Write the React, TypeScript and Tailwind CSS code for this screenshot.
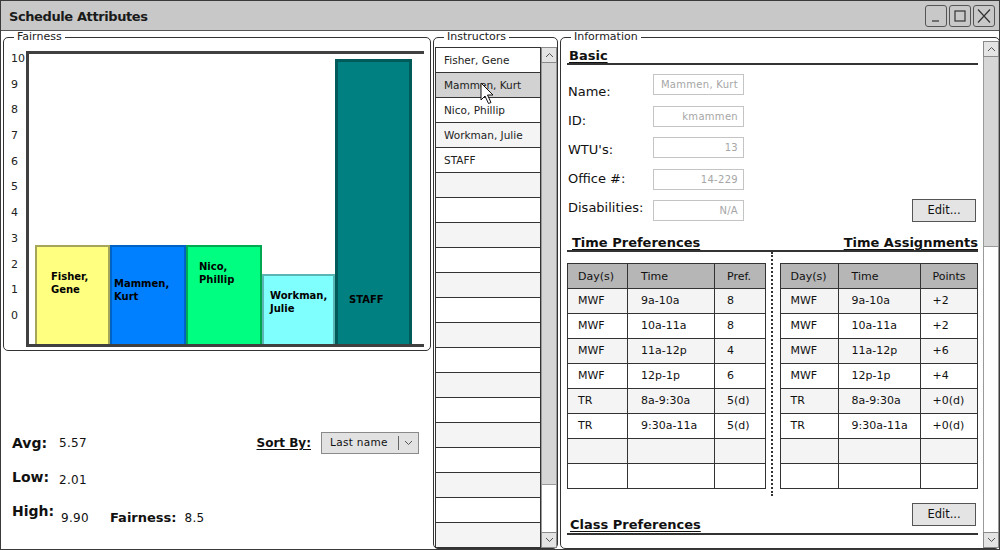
import type { ReactNode } from 'react';

const font = "font-['DejaVu_Sans',sans-serif]";

const bars = [
  { lines: ['Fisher,', 'Gene'], cls: 'h-[99px] w-[75px] border-2 border-b-0 border-[#a6a65a] bg-[#ffff80] pl-[14px] pt-[23px]' },
  { lines: ['Mammen,', 'Kurt'], cls: 'h-[99px] w-[76px] border-2 border-b-0 border-[#0062c4] bg-[#0080ff] pl-[2px] pt-[30px]' },
  { lines: ['Nico,', 'Phillip'], cls: 'h-[99px] w-[76px] border-2 border-b-0 border-[#00a852] bg-[#00ff80] pl-[11px] pt-[13px]' },
  { lines: ['Workman,', 'Julie'], cls: 'h-[70px] w-[73px] border-2 border-b-0 border-[#5cb5b5] bg-[#80ffff] pl-[6px] pt-[13px]' },
  { lines: ['STAFF'], cls: 'h-[285px] w-[77px] border-[3px] border-b-0 border-[#005a5a] bg-[#008080] pl-[11px] pt-[231px]' },
];

const instructors = ['Fisher, Gene', 'Mammen, Kurt', 'Nico, Phillip', 'Workman, Julie', 'STAFF'];

const prefs = [
  ['MWF', '9a-10a', '8'],
  ['MWF', '10a-11a', '8'],
  ['MWF', '11a-12p', '4'],
  ['MWF', '12p-1p', '6'],
  ['TR', '8a-9:30a', '5(d)'],
  ['TR', '9:30a-11a', '5(d)'],
  ['', '', ''],
  ['', '', ''],
];

const assigns = [
  ['MWF', '9a-10a', '+2'],
  ['MWF', '10a-11a', '+2'],
  ['MWF', '11a-12p', '+6'],
  ['MWF', '12p-1p', '+4'],
  ['TR', '8a-9:30a', '+0(d)'],
  ['TR', '9:30a-11a', '+0(d)'],
  ['', '', ''],
  ['', '', ''],
];

const fields = [
  ['Name:', 'Mammen, Kurt'],
  ['ID:', 'kmammen'],
  ["WTU's:", '13'],
  ['Office #:', '14-229'],
  ['Disabilities:', 'N/A'],
];

function Chevron({ up }: { up?: boolean }) {
  return (
    <svg width="9" height="6" viewBox="0 0 9 6">
      <path d={up ? 'M1 5 L4.5 1.5 L8 5' : 'M1 1 L4.5 4.5 L8 1'} fill="none" stroke="#555" strokeWidth="1" />
    </svg>
  );
}

function ArrowButton({ up }: { up?: boolean }) {
  return (
    <div className="flex h-[16px] w-full shrink-0 items-center justify-center border border-[#8a8a8a] bg-[#e4e4e4]">
      <Chevron up={up} />
    </div>
  );
}

function ScrollBar({ thumb }: { thumb: string }) {
  return (
    <div className="flex h-full w-[16px] shrink-0 flex-col bg-white">
      <ArrowButton up />
      <div className={`${thumb} shrink-0 border-x border-b border-[#9a9a9a] bg-[#d6d6d6]`} />
      <div className="flex-1 border-x border-[#9a9a9a]" />
      <ArrowButton />
    </div>
  );
}

function Group({ title, className, children }: { title: string; className: string; children: ReactNode }) {
  return (
    <fieldset className={`flex min-w-0 flex-col rounded-[5px] border border-[#333] ${className}`}>
      <legend className="ml-[10px] px-[3px] text-[11px] leading-[12px] text-[#222]">{title}</legend>
      {children}
    </fieldset>
  );
}

function TitleButton({ children }: { children: ReactNode }) {
  return (
    <div className="flex h-[22px] w-[22px] items-center justify-center rounded-[3px] border border-[#555] bg-[#c8c8c8]">
      <svg width="16" height="16" viewBox="0 0 16 16" fill="none" stroke="#333" strokeWidth="1.2">
        {children}
      </svg>
    </div>
  );
}

function TitleBar() {
  return (
    <div className="flex h-[30px] shrink-0 items-center justify-between border-b border-[#555] bg-[#c8c8c8] pl-[8px] pr-[4px]">
      <span className="pt-[2px] text-[13px] font-bold tracking-[-0.4px] text-[#1a1a1a]">Schedule Attributes</span>
      <div className="flex gap-[2px]">
        <TitleButton>
          <path d="M4 13 H11" />
        </TitleButton>
        <TitleButton>
          <rect x="3" y="3" width="10" height="10" />
        </TitleButton>
        <TitleButton>
          <path d="M2 1.5 L14 14.5 M14 1.5 L2 14.5" />
        </TitleButton>
      </div>
    </div>
  );
}

function Chart() {
  return (
    <div className="flex items-start">
      <div className="mt-[9px] flex h-[271px] w-[22px] flex-col justify-between pl-[7px] text-[11px] leading-[14px] text-[#222]">
        {[10, 9, 8, 7, 6, 5, 4, 3, 2, 1, 0].map((n) => (
          <span key={n}>{n}</span>
        ))}
      </div>
      <div className="mt-[8px] flex h-[296px] w-[398px] items-end border-y-[3px] border-l-[3px] border-[#404040] pl-[6px]">
        {bars.map((b) => (
          <div key={b.lines[0]} className={`${b.cls} shrink-0 text-[10px] font-bold leading-[13px] text-black`}>
            {b.lines.map((l) => (
              <div key={l}>{l}</div>
            ))}
          </div>
        ))}
      </div>
    </div>
  );
}

function LeftPanel() {
  return (
    <div className="flex w-[431px] shrink-0 flex-col">
      <Group title="Fairness" className="ml-[2px] w-[428px] pb-[3px]">
        <Chart />
      </Group>
      <div className="mt-[75px] flex flex-col pl-[11px] pr-[13px] text-[#111]">
        <div className="flex h-[34px] items-center">
          <span className="w-[47px] text-[14px] font-bold">Avg:</span>
          <span className="text-[12px] tracking-[0.3px]">5.57</span>
          <div className="ml-auto flex items-center">
            <span className="text-[12px] font-bold underline underline-offset-2">Sort By:</span>
            <div className="ml-[10px] flex h-[22px] w-[98px] items-center border border-[#8a8a8a] bg-[#e2e2e2]">
              <span className="w-[76px] pl-[8px] text-[10.5px] tracking-[0.3px]">Last name</span>
              <div className="h-[14px] border-l border-[#666]" />
              <div className="flex flex-1 items-center justify-center">
                <Chevron />
              </div>
            </div>
          </div>
        </div>
        <div className="flex h-[34px] items-center">
          <span className="w-[47px] text-[14px] font-bold">Low:</span>
          <span className="pt-[6px] text-[12px] tracking-[0.3px]">2.01</span>
        </div>
        <div className="flex h-[34px] items-center">
          <span className="w-[49px] text-[14px] font-bold">High:</span>
          <span className="w-[49px] pt-[14px] text-[12px] tracking-[0.3px]">9.90</span>
          <span className="pt-[14px] text-[13px] font-bold">Fairness:</span>
          <span className="ml-[8px] pt-[14px] text-[12px] tracking-[0.3px]">8.5</span>
        </div>
      </div>
    </div>
  );
}

function Instructors() {
  const rows = Array.from({ length: 20 }, (_, i) => instructors[i] ?? '');
  return (
    <Group title="Instructors" className="ml-[1px] h-full w-[125px] shrink-0">
      <div className="ml-[1px] mt-[4px] flex min-h-0 flex-1 overflow-hidden">
        <div className="flex w-[106px] flex-col border-x border-t border-[#333]">
          {rows.map((name, i) => (
            <div
              key={i}
              className={`h-[25px] shrink-0 border-b border-[#333] pl-[8px] text-[10.5px] leading-[24px] text-[#222] ${
                i === 1 ? 'bg-[#d2d2d2]' : i % 2 === 1 ? 'bg-[#f4f4f4]' : 'bg-white'
              }`}
            >
              {name}
            </div>
          ))}
        </div>
        <ScrollBar thumb="h-[422px]" />
      </div>
    </Group>
  );
}

function Table({ head, rows, cols }: { head: string[]; rows: string[][]; cols: string[] }) {
  const pads = ['pl-[10px]', 'pl-[13px]', 'pl-[12px]'];
  return (
    <div className="flex flex-col border-x border-t border-[#333] text-[11px] text-[#111]">
      <div className="flex h-[25px] border-b border-[#333] bg-[#b6b6b6]">
        {head.map((h, i) => (
          <div key={h} className={`${cols[i]} ${pads[i]} border-[#333] pt-[5px] ${i < 2 ? 'border-r' : ''}`}>
            {h}
          </div>
        ))}
      </div>
      {rows.map((r, ri) => (
        <div key={ri} className={`flex h-[25px] border-b border-[#333] ${ri % 2 === 0 ? 'bg-[#f4f4f4]' : 'bg-white'}`}>
          {r.map((c, i) => (
            <div key={i} className={`${cols[i]} ${pads[i]} flex items-center border-[#333] ${i < 2 ? 'border-r' : ''}`}>
              {c}
            </div>
          ))}
        </div>
      ))}
    </div>
  );
}

function EditButton() {
  return (
    <div className="flex h-[23px] w-[64px] items-center justify-center border border-[#555] bg-[#e4e4e4] text-[11.5px] text-[#111]">
      Edit...
    </div>
  );
}

function Information() {
  return (
    <Group title="Information" className="ml-[2px] h-full w-[440px] shrink-0">
      <div className="-mt-[2px] flex min-h-0 flex-1 overflow-hidden pl-[2px]">
        <div className="flex w-[420px] flex-col pl-[4px] pr-[5px] pt-[7px] text-[#111]">
          <div className="pl-[2px] text-[13px] font-bold leading-[15px] underline underline-offset-2">Basic</div>
          <div className="h-[2px] shrink-0 bg-[#333]" />

          <div className="mt-[9px] flex">
            <div className="flex w-[86px] flex-col pl-[1px] pt-[3px] text-[13px]">
              {fields.map(([l]) => (
                <div key={l} className="h-[29px] leading-[29px]">
                  {l}
                </div>
              ))}
            </div>
            <div className="flex flex-col gap-[10.5px]">
              {fields.map(([l, v]) => (
                <div
                  key={l}
                  className="h-[21px] w-[91px] border border-[#c4c4c4] pr-[5px] text-right text-[10px] leading-[19px] tracking-[0.3px] text-[#a6a6a6]"
                >
                  {v}
                </div>
              ))}
            </div>
            <div className="ml-auto mr-[2px] self-end">
              <EditButton />
            </div>
          </div>

          <div className="mt-[13px] flex justify-between text-[13px] font-bold leading-[15px]">
            <span className="pl-[5px] underline underline-offset-2">Time Preferences</span>
            <span className="underline underline-offset-2">Time Assignments</span>
          </div>
          <div className="h-[2px] shrink-0 bg-[#333]" />

          <div className="flex items-start">
            <div className="mt-[11px] w-[199px]">
              <Table head={['Day(s)', 'Time', 'Pref.']} rows={prefs} cols={['w-[60px]', 'w-[87px]', 'flex-1']} />
            </div>
            <div className="ml-[5px] h-[244px] border-l-2 border-dotted border-[#333]" />
            <div className="ml-[7px] mt-[11px] w-[199px]">
              <Table head={['Day(s)', 'Time', 'Points']} rows={assigns} cols={['w-[58px]', 'w-[82px]', 'flex-1']} />
            </div>
          </div>

          <div className="flex h-[37px] shrink-0 justify-between">
            <span className="self-end pl-[3px] text-[13px] font-bold leading-[16px] underline underline-offset-2">
              Class Preferences
            </span>
            <div className="mr-[2px] mt-[7px] self-start">
              <EditButton />
            </div>
          </div>
          <div className="h-[2px] shrink-0 bg-[#333]" />
        </div>
        <ScrollBar thumb="h-[190px]" />
      </div>
    </Group>
  );
}

function Cursor() {
  return (
    <svg className="absolute left-[479px] top-[81px]" width="15" height="23" viewBox="0 0 15 23">
      <path d="M1 1 L1 18 L5 14 L8.5 21.5 L11 20.5 L7.5 13 L13 13 Z" fill="white" stroke="#111" strokeWidth="1" strokeLinejoin="round" />
    </svg>
  );
}

export default function App() {
  return (
    <div className={`relative flex h-[550px] w-[1000px] flex-col overflow-hidden border border-[#3a3a3a] bg-white text-[#111] ${font}`}>
      <TitleBar />
      <div className="flex h-[518px]">
        <LeftPanel />
        <Instructors />
        <Information />
      </div>
      <Cursor />
    </div>
  );
}
